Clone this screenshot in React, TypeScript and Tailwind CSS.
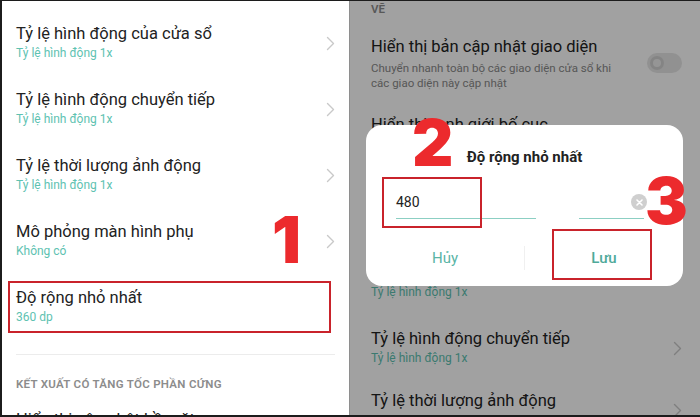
import React from "react";

const FONT = { fontFamily: "Roboto, 'Noto Sans', sans-serif" };
const BIG = { fontFamily: "Inter, Roboto, sans-serif" };

const Chevron = () => (
  <svg width="9" height="15" viewBox="0 0 9 15" fill="none">
    <polyline points="1.5,1.5 7.5,7.5 1.5,13.5" stroke="#c9c9c9" strokeWidth="1.4" strokeLinecap="round" strokeLinejoin="round" />
  </svg>
);

const Row = ({ title, sub, chevron = true }: { title: string; sub: string; chevron?: boolean }) => (
  <div className="flex h-[66px] shrink-0 items-start justify-between pt-[22px] pr-[14px]">
    <div>
      <div className="text-[16.5px] leading-[22px] text-[#222]">{title}</div>
      <div className="text-[12px] leading-[16px] text-[#5ec2b1]">{sub}</div>
    </div>
    {chevron && (
      <div className="mt-[13px]">
        <Chevron />
      </div>
    )}
  </div>
);

const BigNumber = ({ n, className }: { n: string; className: string }) => (
  <div
    style={BIG}
    className={`absolute text-[64px] leading-none font-black text-[#ec2a2d] ${className}`}
  >
    {n}
  </div>
);

export default function App() {
  return (
    <div
      style={FONT}
      className="relative flex h-[417px] w-[700px] overflow-hidden border-t border-l-2 border-b-2 border-[#1c1c1c] bg-white"
    >
      {/* left screen */}
      <div className="flex w-[347px] shrink-0 flex-col pl-[14px]">
        <Row title="Tỷ lệ hình động của cửa sổ" sub="Tỷ lệ hình động 1x" />
        <Row title="Tỷ lệ hình động chuyển tiếp" sub="Tỷ lệ hình động 1x" />
        <Row title="Tỷ lệ thời lượng ảnh động" sub="Tỷ lệ hình động 1x" />
        <Row title="Mô phỏng màn hình phụ" sub="Không có" />
        <Row title="Độ rộng nhỏ nhất" sub="360 dp" chevron={false} />
        <div className="mt-[23px] mr-[14px] shrink-0 border-t border-[#ececec]" />
        <div className="mt-[21px] shrink-0 text-[11.5px] leading-[16px] font-semibold tracking-[0.3px] text-[#8c8c8c]">
          KẾT XUẤT CÓ TĂNG TỐC PHẦN CỨNG
        </div>
        <div className="mt-[17px] shrink-0 text-[16.5px] leading-[22px] text-[#222]">Hiển thị cập nhật bề mặt</div>
      </div>

      <div className="w-px shrink-0 bg-[#8e8e8e]" />

      {/* right screen, dimmed by the dialog scrim */}
      <div className="relative flex-1 pl-[21px] pr-[18px]">
        <div className="text-[11.5px] leading-[16px] font-semibold text-[#8c8c8c]">VẼ</div>
        <div className="mt-[19px] flex items-start justify-between">
          <div>
            <div className="text-[16.5px] leading-[22px] text-[#222]">Hiển thị bản cập nhật giao diện</div>
            <div className="mt-[3px] w-[250px] text-[11.5px] leading-[15px] text-[#8a8a8a]">
              Chuyển nhanh toàn bộ các giao diện cửa sổ khi các giao diện này cập nhật
            </div>
          </div>
          <div className="mt-[17px] flex h-[20px] w-[35px] items-center rounded-full bg-[#e6e6e6] px-[3px]">
            <div className="h-[14px] w-[14px] rounded-full border-[3px] border-[#d2d2d2] bg-[#ececec]" />
          </div>
        </div>
        <div className="mt-[23px] text-[16.5px] leading-[22px] text-[#222]">Hiển thị ranh giới bố cục</div>
        <div className="text-[12px] leading-[16px] text-[#8a8a8a]">Hiển thị giới hạn clip, lề, v.v.</div>
        <div className="mt-[29px] text-[16.5px] leading-[22px] text-[#222]">Buộc hướng bố cục RTL</div>
        <div className="text-[12px] leading-[16px] text-[#8a8a8a]">Buộc hướng bố cục màn hình RTL</div>
        <div className="mt-[43px] text-[16.5px] leading-[22px] text-[#222]">Tỷ lệ hình động của cửa sổ</div>
        <div className="text-[12px] leading-[16px] text-[#5ec2b1]">Tỷ lệ hình động 1x</div>
        <div className="flex items-start justify-between pt-[28px]">
          <div>
            <div className="text-[16.5px] leading-[22px] text-[#222]">Tỷ lệ hình động chuyển tiếp</div>
            <div className="text-[12px] leading-[16px] text-[#5ec2b1]">Tỷ lệ hình động 1x</div>
          </div>
          <div className="mt-[13px]">
            <Chevron />
          </div>
        </div>
        <div className="flex items-start justify-between pt-[24px]">
          <div className="text-[16.5px] leading-[22px] text-[#222]">Tỷ lệ thời lượng ảnh động</div>
          <div className="mt-[13px]">
            <Chevron />
          </div>
        </div>

        <div className="absolute inset-0 bg-black/[0.37]" />

        {/* dialog */}
        <div className="absolute top-[124px] left-[16px] flex h-[161px] w-[317px] flex-col rounded-[16px] bg-white">
          <div className="pt-[22px] text-center text-[15px] leading-[20px] font-bold text-[#222]">
            Độ rộng nhỏ nhất
          </div>
          <div className="mt-[25px] flex pl-[30px] pr-[39px]">
            <div className="w-[140px] border-b border-[#8ccfc3] pb-[6px] text-[14px] leading-[20px] text-[#222]">480</div>
            <div className="w-[43px]" />
            <div className="flex flex-1 justify-end border-b border-[#8ccfc3] pb-[6px]">
              <div className="mt-[2px] mr-[-3px] flex h-[16px] w-[16px] items-center justify-center rounded-full bg-[#cfcfcf]">
                <svg width="7" height="7" viewBox="0 0 7 7">
                  <path d="M1 1L6 6M6 1L1 6" stroke="white" strokeWidth="1.6" strokeLinecap="round" />
                </svg>
              </div>
            </div>
          </div>
          <div className="mt-auto flex h-[56px] items-center">
            <div className="flex-1 text-center text-[15px] text-[#5ab5a6]">Hủy</div>
            <div className="h-[24px] w-px bg-[#f0f0f0]" />
            <div className="flex-1 text-center text-[15px] font-medium text-[#4ea999]">Lưu</div>
          </div>
        </div>
      </div>

      {/* annotations */}
      <div className="absolute top-[280px] left-[6px] h-[52px] w-[323px] border-2 border-[#c9232b]" />
      <div className="absolute top-[176px] left-[380px] h-[51px] w-[100px] border-2 border-[#c9232b]" />
      <div className="absolute top-[228px] left-[550px] h-[51px] w-[100px] border-2 border-[#c9232b]" />
      <BigNumber n="1" className="top-[207px] left-[270px]" />
      <BigNumber n="2" className="top-[110px] left-[410px]" />
      <BigNumber n="3" className="top-[168px] left-[643px]" />
    </div>
  );
}
